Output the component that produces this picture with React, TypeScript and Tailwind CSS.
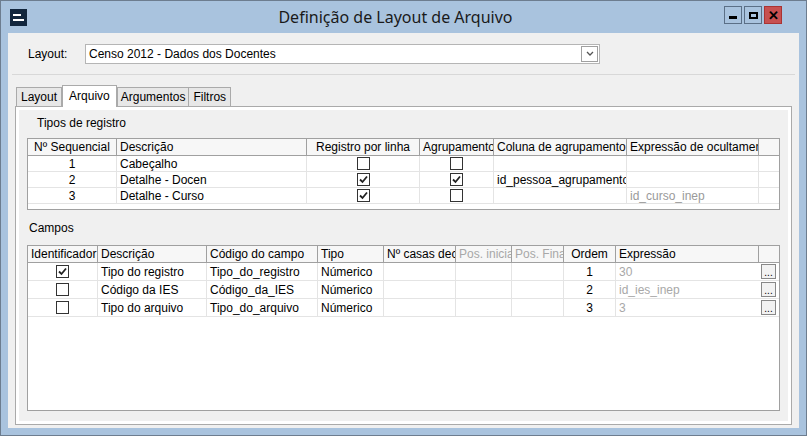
import React from 'react';

const Check = ({ on }: { on: boolean }) => (
    <span className="inline-flex w-[13px] h-[13px] border border-[#333] bg-white items-center justify-center">
        {on && (
            <svg width="9" height="9" viewBox="0 0 9 9">
                <path d="M1 4.5 L3.5 7 L8 1.5" stroke="#222" strokeWidth="1.8" fill="none" />
            </svg>
        )}
    </span>
);

const g1cols = [89, 190, 113, 74, 133, 132];
const g2cols = [70, 109, 111, 66, 72, 56, 52, 52, 143];

const App: React.FC = () => {
    const tipos = [
        { n: '1', d: 'Cabeçalho', r: false, a: false, c: '', e: '' },
        { n: '2', d: 'Detalhe - Docen', r: true, a: true, c: 'id_pessoa_agrupamento', e: '' },
        { n: '3', d: 'Detalhe - Curso', r: true, a: false, c: '', e: 'id_curso_inep' },
    ];
    const campos = [
        { i: true, d: 'Tipo do registro', c: 'Tipo_do_registro', o: '1', e: '30' },
        { i: false, d: 'Código da IES', c: 'Código_da_IES', o: '2', e: 'id_ies_inep' },
        { i: false, d: 'Tipo do arquivo', c: 'Tipo_do_arquivo', o: '3', e: '3' },
    ];
    const cell = 'h-full flex items-center px-[3px] border-r border-[#e4e4e4] overflow-hidden whitespace-nowrap';
    const head = 'h-full flex items-center px-[3px] border-r border-[#a0a0a0] whitespace-nowrap overflow-hidden';

    return (
        <div className="w-[807px] h-[436px] bg-[#a9c3de] border border-[#6d7d8f] flex flex-col text-[12px] text-black" style={{ fontFamily: '"Liberation Sans", Arial, sans-serif' }}>
            <div className="h-[32px] flex items-center relative shrink-0">
                <div className="ml-[9px] w-[17px] h-[17px] bg-[#12263d] flex flex-col justify-center gap-[3px] px-[3px]">
                    <div className="h-[2px] bg-white w-[8px]" />
                    <div className="h-[2px] bg-white w-[11px]" />
                </div>
                <div className="flex-1 text-center text-[16px] text-[#1a1a1a] pl-[40px]" style={{ fontFamily: '"Noto Sans", sans-serif' }}>Definição de Layout de Arquivo</div>
                <div className="flex gap-[2px] mr-[24px] mt-[-4px]">
                    <div className="w-[18px] h-[18px] border border-[#5b6f86] flex items-center justify-center"><div className="w-[8px] h-[3px] bg-black mt-[4px]" /></div>
                    <div className="w-[18px] h-[18px] border border-[#5b6f86] flex items-center justify-center"><div className="w-[9px] h-[7px] border-2 border-black" /></div>
                    <div className="w-[18px] h-[18px] bg-[#c75050] border border-[#a33] flex items-center justify-center text-black font-bold text-[13px] leading-none">✕</div>
                </div>
            </div>
            <div className="flex-1 mx-[7px] mb-[7px] bg-[#f0f0f0] flex flex-col">
                <div className="flex items-center h-[42px] pl-[16px] border-b border-[#d8d8d8] mx-[4px]">
                    <span className="w-[57px]">Layout:</span>
                    <div className="w-[515px] h-[20px] bg-white border border-[#b5b5b5] flex items-center pl-[3px]">
                        <span className="flex-1">Censo 2012 - Dados dos Docentes</span>
                        <div className="w-[17px] h-[16px] border border-[#a0a0a0] mr-[1px] flex items-center justify-center">
                            <svg width="8" height="5" viewBox="0 0 8 5"><path d="M1 1 L4 4 L7 1" stroke="#555" strokeWidth="1.3" fill="none" /></svg>
                        </div>
                    </div>
                </div>
                <div className="flex items-end pl-[8px] mt-[10px] h-[21px]">
                    <div className="px-[4px] h-[19px] border border-[#aaa] border-b-0 bg-[#e7e7e7] flex items-center">Layout</div>
                    <div className="px-[6px] h-[22px] border border-[#aaa] border-b-0 bg-white flex items-start pt-[1px] relative top-[1px] z-10">Arquivo</div>
                    <div className="px-[3px] h-[19px] border border-[#aaa] border-b-0 bg-[#e7e7e7] flex items-center">Argumentos</div>
                    <div className="px-[4px] h-[19px] border border-[#aaa] border-l-0 border-b-0 bg-[#e7e7e7] flex items-center">Filtros</div>
                </div>
                <div className="mx-[7px] mb-[3px] flex-1 border border-[#aaa] bg-white flex flex-col">
                    <div className="m-[3px] flex-1 bg-[#f0f0f0] flex flex-col px-[8px]">
                        <div className="pl-[10px] pt-[4px] h-[20px]">Tipos de registro</div>
                        <div className="mt-[8px] h-[72px] border border-[#a0a0a0] bg-white flex flex-col">
                            <div className="flex h-[17px] border-b border-[#a0a0a0] bg-[#f7f7f7]">
                                {['Nº Sequencial', 'Descrição', 'Registro por linha', 'Agrupamento', 'Coluna de agrupamento', 'Expressão de ocultamento'].map((h, i) => (
                                    <div key={h} className={head + (i === 0 || i === 2 ? ' justify-center' : '')} style={{ width: g1cols[i] }}>{h}</div>
                                ))}
                            </div>
                            {tipos.map(t => (
                                <div key={t.n} className="flex h-[16px] border-b border-[#e4e4e4]">
                                    <div className={cell + ' justify-center'} style={{ width: g1cols[0] }}>{t.n}</div>
                                    <div className={cell} style={{ width: g1cols[1] }}>{t.d}</div>
                                    <div className={cell + ' justify-center'} style={{ width: g1cols[2] }}><Check on={t.r} /></div>
                                    <div className={cell + ' justify-center'} style={{ width: g1cols[3] }}><Check on={t.a} /></div>
                                    <div className={cell} style={{ width: g1cols[4] }}>{t.c}</div>
                                    <div className={cell + ' text-[#9a9a9a]'} style={{ width: g1cols[5] }}>{t.e}</div>
                                </div>
                            ))}
                        </div>
                        <div className="pl-[2px] mt-[9px] h-[20px]">Campos</div>
                        <div className="mt-[6px] h-[166px] border border-[#a0a0a0] bg-white flex flex-col">
                            <div className="flex h-[17px] border-b border-[#a0a0a0] bg-[#f7f7f7]">
                                {['Identificador', 'Descrição', 'Código do campo', 'Tipo', 'Nº casas dec.', 'Pos. inicial', 'Pos. Final', 'Ordem', 'Expressão'].map((h, i) => (
                                    <div key={h} className={head + (i === 5 || i === 6 ? ' text-[#a8a8a8]' : '') + (i === 7 ? ' justify-center' : '')} style={{ width: g2cols[i] }}>{h}</div>
                                ))}
                            </div>
                            {campos.map(c => (
                                <div key={c.o} className="flex h-[18px] border-b border-[#e4e4e4]">
                                    <div className={cell + ' justify-center'} style={{ width: g2cols[0] }}><Check on={c.i} /></div>
                                    <div className={cell} style={{ width: g2cols[1] }}>{c.d}</div>
                                    <div className={cell} style={{ width: g2cols[2] }}>{c.c}</div>
                                    <div className={cell} style={{ width: g2cols[3] }}>Númerico</div>
                                    <div className={cell} style={{ width: g2cols[4] }}></div>
                                    <div className={cell} style={{ width: g2cols[5] }}></div>
                                    <div className={cell} style={{ width: g2cols[6] }}></div>
                                    <div className={cell + ' justify-center'} style={{ width: g2cols[7] }}>{c.o}</div>
                                    <div className={cell + ' text-[#a8a8a8] border-r-0'} style={{ width: g2cols[8] }}>{c.e}</div>
                                    <div className="flex items-center pl-[2px]">
                                        <div className="w-[15px] h-[15px] border border-[#888] bg-[#f2f2f2] flex items-end justify-center text-[10px] leading-[10px]">...</div>
                                    </div>
                                </div>
                            ))}
                        </div>
                    </div>
                </div>
            </div>
        </div>
    );
};

export default App;
